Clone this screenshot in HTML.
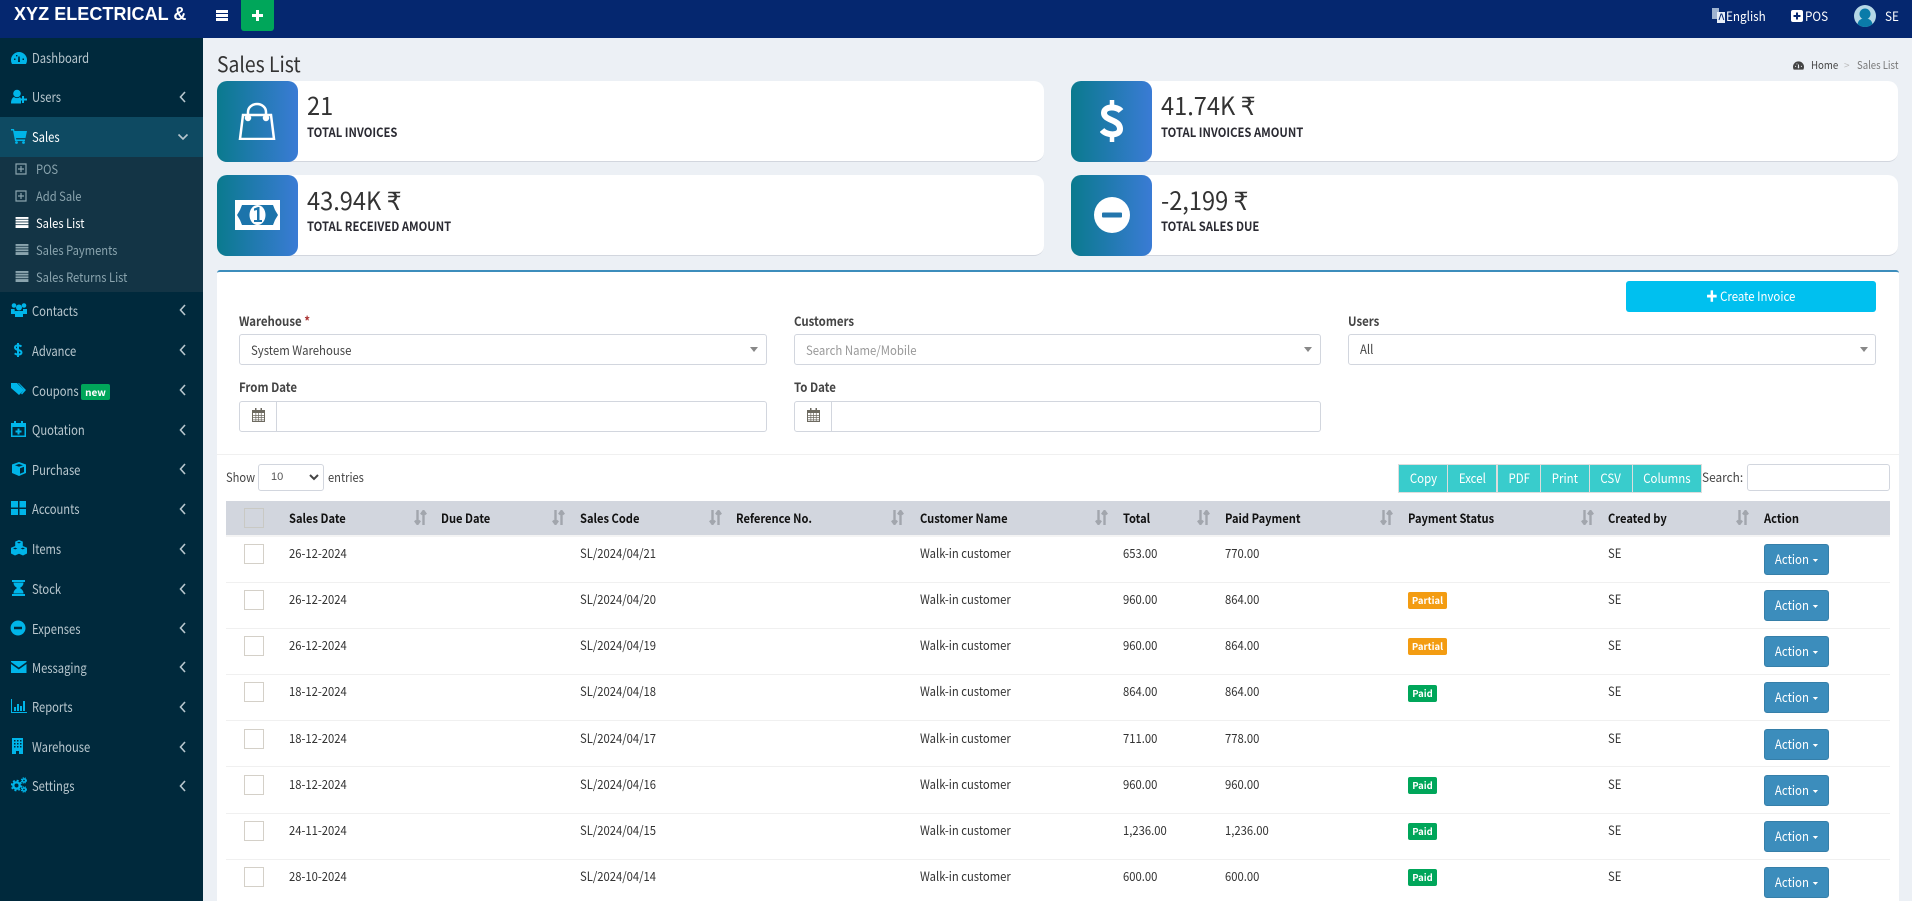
<!DOCTYPE html>
<html><head><meta charset="utf-8"><title>Sales List</title>
<style>
*{box-sizing:border-box}
html,body{margin:0;padding:0;width:1912px;height:901px;overflow:hidden;background:#ecf0f5;font-family:"Noto Sans CJK SC","Liberation Sans",sans-serif;color:#333}
#w{position:absolute;left:0;top:0;width:1912px;height:901px;overflow:hidden}
.a,.t,.s,.c,.h{position:absolute}
.t,.s,.c,.h{white-space:nowrap;line-height:20px;transform-origin:0 50%}
.s{left:32px;font-size:13.5px;color:#b8c7ce;transform:scaleX(.83)}
.i{position:absolute;left:11px;width:16px;height:16px;fill:#00b5e9}
.ch{position:absolute;left:179px;width:8px;height:12px;fill:none;stroke:#b8c7ce;stroke-width:1.6}
.sub{left:36px;font-size:13px;color:#8aa4ae;transform:scaleX(.86)}
.c{font-size:12.5px;color:#333;transform:scaleX(.9)}
.h{font-size:12.5px;font-weight:700;color:#111;top:508px;transform:scaleX(.89)}
.so{position:absolute;top:510px;width:13px;height:15px;stroke:#a2a6ad;fill:none;stroke-width:2.4}
.cb{position:absolute;left:244px;width:20px;height:20px;border:1px solid #d4d0c8;background:#fff}
.ab{position:absolute;left:1764px;width:65px;height:31px;background:#3c8dbc;border:1px solid #367fa9;border-radius:3px;color:#fff;font-size:13px;line-height:27px;text-align:center}
.ab i{display:inline-block;width:0;height:0;border:3.5px solid transparent;border-top-color:#fff;border-bottom:0;margin-left:4px;vertical-align:2px}
.b{display:inline-block;transform:scaleX(.88)}
.l{position:absolute;left:1408px;height:17px;border-radius:2px;color:#fff;font-size:9.5px;font-weight:700;line-height:17px;text-align:center}
.pa{width:39px;background:#f39c12}.pd{width:29px;background:#00a65a}
.card{position:absolute;width:827px;height:81px;background:#fff;border-radius:10px;border-bottom:1px solid #d2d6de}
.ic{position:absolute;width:81px;height:81px;border-radius:10px;background:linear-gradient(to right,#0a7a8e,#3a7bd5)}
.n{font-size:25px;line-height:34px;color:#333;transform:scaleX(.945)}
.lb{font-size:13px;font-weight:700;color:#2b2b33;transform:scaleX(.865)}
.fl{font-size:13px;font-weight:700;color:#444;transform:scaleX(.88)}
.inp{position:absolute;height:31px;background:#fff;border:1px solid #d2d6de;border-radius:3px}
.ar{position:absolute;width:0;height:0;border:4px solid transparent;border-top:5px solid #888;border-bottom:0}
.bt{position:absolute;top:464px;height:29px;background:#39cccc;border:1px solid #ddd;color:#fff;font-size:13px;line-height:26px;text-align:center}
.fi{font-size:12.5px;color:#444;transform:scaleX(.91)}
.tb{font-size:13px;color:#fff;transform:scaleX(.9)}
.x{transform:scaleX(.89)}
</style></head><body><div id="w">
<svg width="0" height="0" style="position:absolute"><defs>
<symbol id="sort" viewBox="0 0 13 15"><path d="M3.500 0v14M1 10.500l2.500 3.500 2.500-3.500M9.500 15V1M7 4.500L9.500 1 12 4.500"/></symbol>
<symbol id="cal" viewBox="0 0 13 14"><path fill="#6d6a60" d="M0 2h13v12H0zM1 5v8h11V5z"/><path fill="#6d6a60" d="M3 0h1.500v3H3zM8.500 0H10v3H8.500zM1 7h11v.7H1zM1 9.300h11v.7H1zM1 11.500h11v.7H1zM3.500 5h.7v8h-.7zM6.200 5h.7v8h-.7zM8.900 5h.7v8h-.7z"/></symbol>
<symbol id="gauge" viewBox="0 0 16 16"><path d="M8 2a8 8 0 0 0-8 8c0 1.500.4 3 1 4h14c.6-1 1-2.500 1-4a8 8 0 0 0-8-8z"/><path fill="#00293c" d="M7.300 6.500h1.400L9 12H7zM3 8.500h1.500V10H3zM11.500 8.500H13V10h-1.500zM5 5h1.400v1.400H5z"/></symbol>
<symbol id="list" viewBox="0 0 14 12"><path d="M0 0h14v12H0z" fill-opacity=".25"/><path d="M0 0h14v2H0zM0 3.200h14v1.600H0zM0 6h14v1.600H0zM0 8.800h14V12H0z"/></symbol>
<symbol id="pl" viewBox="0 0 12 12"><path fill="none" stroke-width="1.200" d="M1 1h10v10H1zM6 3v6M3 6h6"/></symbol>
</defs></svg>

<!-- top bar -->
<div class="a" style="left:0;top:0;width:1912px;height:38px;background:#05276f"></div>
<div class="t" style="left:14px;top:4px;font:700 18px/20px 'Liberation Sans',sans-serif;color:#fff;letter-spacing:.05px">XYZ ELECTRICAL &amp;</div>
<div class="a" style="left:216px;top:10px;width:12px;height:2.500px;background:#fff;box-shadow:0 4px 0 #fff,0 8px 0 #fff"></div>
<div class="a" style="left:241px;top:0;width:33px;height:31px;background:#00a65a;border-radius:0 0 3px 3px"></div>
<svg class="a" style="left:252px;top:10px" width="11" height="11"><path d="M4 0h3v4h4v3H7v4H4V7H0V4h4z" fill="#fff"/></svg>
<svg class="a" style="left:1712px;top:8px" width="13" height="15"><path d="M0 0h7v11H0z" fill="#9fb3d0"/><path d="M5 4h8v11H5z" fill="#e8eef7"/><path d="M7 12l2-6h.8l2 6" stroke="#05276f" fill="none"/></svg>
<div class="t tb" style="left:1726px;top:6px">English</div>
<svg class="a" style="left:1791px;top:10px" width="12" height="12"><rect width="12" height="12" rx="2" fill="#fff"/><path d="M5 2.500h2V5h2.500v2H7v2.500H5V7H2.500V5H5z" fill="#05276f"/></svg>
<div class="t tb" style="left:1805px;top:6px">POS</div>
<svg class="a" style="left:1854px;top:5px" width="22" height="22"><circle cx="11" cy="11" r="11" fill="#b5d7e6"/><circle cx="11" cy="9" r="5.500" fill="#0a7ba9"/><path d="M3.500 19c1-4.500 4-5.500 7.500-5.500s6.500 1 7.500 5.500a11 11 0 0 1-15 0z" fill="#0a7ba9"/></svg>
<div class="t tb" style="left:1885px;top:6px">SE</div>

<!-- sidebar -->
<div class="a" style="left:0;top:38px;width:203px;height:863px;background:#00293c"></div>
<div class="a" style="left:0;top:117px;width:203px;height:40px;background:#0e4a62"></div>
<div class="a" style="left:0;top:157px;width:203px;height:135px;background:#133445"></div>

<svg class="i" style="top:50px;"><use href="#gauge"/></svg><div class="s" style="top:47px">Dashboard</div>
<svg class="i" style="top:89px;" viewBox="0 0 16 16"><circle cx="6" cy="4.500" r="3.800"/><path d="M0 14.500c0-4 1.500-6 3-6.500 2 1.500 4 1.500 6 0l1 1.500v5zM11 7h2v2.500h3v2h-3V14h-2v-2.500H8.500v-2H11z"/></svg><div class="s" style="top:86px">Users</div>
<svg class="ch" style="top:91px"><path d="M6 1L1.500 6 6 11"/></svg>
<svg class="i" style="top:128px;" viewBox="0 0 16 16"><path d="M0 1h3l.5 2H16l-1.500 7H5l.3 1.500H14V13H4L2 2.500H0z"/><circle cx="5.500" cy="14.500" r="1.400"/><circle cx="12.500" cy="14.500" r="1.400"/></svg><div class="s" style="top:126px;color:#fff">Sales</div>
<svg class="ch" style="top:131px;left:177px;width:12px"><path d="M1.500 3.500L6 8l4.500-4.500"/></svg>

<svg class="a" style="left:15px;top:163px;fill:none;stroke:#8aa4ae" width="12" height="12"><use href="#pl"/></svg><div class="s sub" style="top:159px">POS</div>
<svg class="a" style="left:15px;top:190px;fill:none;stroke:#8aa4ae" width="12" height="12"><use href="#pl"/></svg><div class="s sub" style="top:186px">Add Sale</div>
<svg class="a" style="left:15px;top:217px;fill:#fff" width="14" height="11"><use href="#list"/></svg><div class="s sub" style="top:213px;color:#fff">Sales List</div>
<svg class="a" style="left:15px;top:244px;fill:#8aa4ae" width="14" height="11"><use href="#list"/></svg><div class="s sub" style="top:240px">Sales Payments</div>
<svg class="a" style="left:15px;top:271px;fill:#8aa4ae" width="14" height="11"><use href="#list"/></svg><div class="s sub" style="top:267px">Sales Returns List</div>

<svg class="i" style="top:302px;" viewBox="0 0 16 16"><circle cx="8" cy="5.500" r="3"/><circle cx="3" cy="3.500" r="2.300"/><circle cx="13" cy="3.500" r="2.300"/><path d="M0 7h3.500L4 10v2H0zM12 7h4v5h-4zM4 9h8v6H4z"/></svg><div class="s" style="top:300px">Contacts</div>
<svg class="ch" style="top:304px"><path d="M6 1L1.500 6 6 11"/></svg>
<svg class="i" style="top:342px;left:10px" viewBox="0 0 16 16"><path fill="none" stroke="#00b5e9" stroke-width="2" d="M11.500 4.500C9.500 2.800 5 3 5 5.500c0 3 6.500 2 6.500 5 0 2.500-4.800 2.700-6.800.8M8 1v14"/></svg><div class="s" style="top:340px">Advance</div>
<svg class="ch" style="top:344px"><path d="M6 1L1.500 6 6 11"/></svg>
<svg class="i" style="top:381px;" viewBox="0 0 16 16"><path d="M0 2h6l7 7-5 5-8-7zM8 2l7 7-4 4.500-1-1L13 9 7 2z"/></svg><div class="s" style="top:380px">Coupons</div>
<div class="a" style="left:81px;top:384px;width:29px;height:16px;background:#00a65a;border-radius:2px;color:#fff;font-size:10px;font-weight:700;line-height:16px;text-align:center">new</div>
<svg class="ch" style="top:384px"><path d="M6 1L1.500 6 6 11"/></svg>
<svg class="i" style="top:421px;left:11px" viewBox="0 0 16 16"><path d="M0 2h3V0h2v2h5V0h2v2h3v14H0zM1.500 6v8.500h12V6zM6.500 7.500h2V9.500h2v2h-2v2h-2v-2h-2v-2h2z"/></svg><div class="s" style="top:419px">Quotation</div>
<svg class="ch" style="top:424px"><path d="M6 1L1.500 6 6 11"/></svg>
<svg class="i" style="top:461px;" viewBox="0 0 16 16"><path d="M8 1l7 2.500v8.500L8 15 1 12V3.500zM8 3L4 4.300 8 5.800l4-1.500zM9 7.300v5.500l4-1.700V5.700z"/></svg><div class="s" style="top:459px">Purchase</div>
<svg class="ch" style="top:463px"><path d="M6 1L1.500 6 6 11"/></svg>
<svg class="i" style="top:500px;" viewBox="0 0 16 16"><path d="M0 1h7v6.500H0zM8.500 1H15v6.500H8.500zM0 9h7v6H0zM8.500 9H15v6H8.500z"/></svg><div class="s" style="top:498px">Accounts</div>
<svg class="ch" style="top:503px"><path d="M6 1L1.500 6 6 11"/></svg>
<svg class="i" style="top:540px;" viewBox="0 0 16 16"><path d="M8 0l3.800 1.600V6L16 7.800v5.700L12 15.500l-4-1.700-4 1.700-4-2V7.800L4.200 6V1.600z"/><path fill="#00293c" d="M6 2.600l2 .8 2-.8-2-.8zM2 8.500l2.200.9 2.200-.9-2.200-.9zM9.600 8.500l2.200.9 2.200-.9-2.200-.9z"/></svg><div class="s" style="top:538px">Items</div>
<svg class="ch" style="top:543px"><path d="M6 1L1.500 6 6 11"/></svg>
<svg class="i" style="top:580px;left:11px" viewBox="0 0 16 16"><path d="M1 0h13v2H1zM1 14h13v2H1zM2.500 2.500h10C12.500 6 10 7 9 8c1 1 3.500 2 3.500 5.500h-10C2.500 10 5 9 6 8 5 7 2.500 6 2.500 2.500z"/></svg><div class="s" style="top:578px">Stock</div>
<svg class="ch" style="top:583px"><path d="M6 1L1.500 6 6 11"/></svg>
<svg class="i" style="top:620px;left:10px" viewBox="0 0 16 16"><path fill-rule="evenodd" d="M8 .5a7.500 7.500 0 1 0 .1 0zM4 6.800h8v2.400H4z"/></svg><div class="s" style="top:618px">Expenses</div>
<svg class="ch" style="top:622px"><path d="M6 1L1.500 6 6 11"/></svg>
<svg class="i" style="top:659px;" viewBox="0 0 16 16"><path d="M0 2h15.500v1L7.800 8.500 0 3zM0 5l7.800 5.500L15.500 5v9H0z"/></svg><div class="s" style="top:657px">Messaging</div>
<svg class="ch" style="top:661px"><path d="M6 1L1.500 6 6 11"/></svg>
<svg class="i" style="top:698px;" viewBox="0 0 16 16"><path d="M0 1h1v13h16v1H0zM3 9h2v4H3zM6 6h2v7H6zM9 8h2v5H9zM12 3h2v10h-2z"/></svg><div class="s" style="top:696px">Reports</div>
<svg class="ch" style="top:701px"><path d="M6 1L1.500 6 6 11"/></svg>
<svg class="i" style="top:738px;" viewBox="0 0 16 16"><path d="M1 0h11v16H8v-3H5v3H1zM3 2v1.500h1.500V2zM6 2v1.500h1.500V2zM9 2v1.500h1.500V2zM3 5v1.500h1.500V5zM6 5v1.500h1.500V5zM9 5v1.500h1.500V5zM3 8v1.500h1.500V8zM6 8v1.500h1.500V8zM9 8v1.500h1.500V8z"/></svg><div class="s" style="top:736px">Warehouse</div>
<svg class="ch" style="top:741px"><path d="M6 1L1.500 6 6 11"/></svg>
<svg class="i" style="top:777px;" viewBox="0 0 16 16"><circle cx="5.500" cy="8.500" r="3.200" fill="none" stroke="#00b5e9" stroke-width="2.400"/><circle cx="5.500" cy="8.500" r="5" fill="none" stroke="#00b5e9" stroke-width="1.600" stroke-dasharray="2 1.930"/><circle cx="13" cy="3.500" r="1.600" fill="none" stroke="#00b5e9" stroke-width="1.400"/><circle cx="13" cy="3.500" r="2.700" fill="none" stroke="#00b5e9" stroke-width="1" stroke-dasharray="1.200 1"/><circle cx="13" cy="12.500" r="1.600" fill="none" stroke="#00b5e9" stroke-width="1.400"/><circle cx="13" cy="12.500" r="2.700" fill="none" stroke="#00b5e9" stroke-width="1" stroke-dasharray="1.200 1"/></svg><div class="s" style="top:775px">Settings</div>
<svg class="ch" style="top:780px"><path d="M6 1L1.500 6 6 11"/></svg>

<!-- title -->
<div class="t" style="left:217px;top:50px;font-size:21px;line-height:28px;color:#333;transform:scaleX(.92)">Sales List</div>
<svg class="a" style="left:1793px;top:60px" width="11" height="11" viewBox="0 0 16 16"><path fill="#444" d="M8 2a8 8 0 0 0-8 8c0 1.500.4 3 1 4h14c.6-1 1-2.500 1-4a8 8 0 0 0-8-8z"/><path fill="#ecf0f5" d="M7.300 6.500h1.400L9 12H7zM3 8.500h1.500V10H3zM11.500 8.500H13V10h-1.500zM5 5h1.400v1.400H5z"/></svg>
<div class="t" style="left:1811px;top:55px;font-size:11px;color:#444;transform:scaleX(.88)">Home</div>
<div class="t" style="left:1844px;top:55px;font-size:10px;color:#bbb">&gt;</div>
<div class="t" style="left:1857px;top:55px;font-size:11px;color:#777;transform:scaleX(.87)">Sales List</div>

<!-- cards -->
<div class="card" style="left:217px;top:81px"></div><div class="ic" style="left:217px;top:81px"></div>
<div class="card" style="left:1071px;top:81px"></div><div class="ic" style="left:1071px;top:81px"></div>
<div class="card" style="left:217px;top:175px"></div><div class="ic" style="left:217px;top:175px"></div>
<div class="card" style="left:1071px;top:175px"></div><div class="ic" style="left:1071px;top:175px"></div>

<svg class="a" style="left:238px;top:102px" width="38" height="38" fill="none" stroke="#fff" stroke-width="2.500"><path d="M5 13h28l3 24H2z"/><path d="M10 14V10a9 8 0 0 1 18 0v4"/><circle cx="10" cy="16" r="2" fill="#fff"/><circle cx="28" cy="16" r="2" fill="#fff"/></svg>
<svg class="a" style="left:1100px;top:100px" width="24" height="42" fill="none" stroke="#fff" stroke-width="6"><path d="M21 11C17 6 4 6 4 13c0 8 16 6 16 16 0 7-13 7-18 1"/><path d="M12 0v7M12 35v7" stroke-width="4.500"/></svg>
<svg class="a" style="left:235px;top:200px" width="45" height="30"><path d="M0 0h45v30H0z" fill="#fff"/><path d="M7 5h31l2 5 3 5-3 5-2 5H7l-2-5-3-5 3-5z" fill="#1c74ab"/><ellipse cx="22.500" cy="15" rx="8" ry="10" fill="#fff"/><path d="M19 8.500l4-1.500h1.500v13H27v2h-8v-2h3V10l-3 .8z" fill="#1c74ab"/></svg>
<svg class="a" style="left:1094px;top:197px" width="36" height="36"><circle cx="18" cy="18" r="18" fill="#fff"/><rect x="8" y="15.500" width="20" height="5" rx="1" fill="#2376ad"/></svg>

<div class="t n" style="left:307px;top:88px">21</div>
<div class="t lb" style="left:307px;top:122px">TOTAL INVOICES</div>
<div class="t n" style="left:1161px;top:88px">41.74K ₹</div>
<div class="t lb" style="left:1161px;top:122px">TOTAL INVOICES AMOUNT</div>
<div class="t n" style="left:307px;top:183px">43.94K ₹</div>
<div class="t lb" style="left:307px;top:216px">TOTAL RECEIVED AMOUNT</div>
<div class="t n" style="left:1161px;top:183px">-2,199 ₹</div>
<div class="t lb" style="left:1161px;top:216px">TOTAL SALES DUE</div>

<!-- main box -->
<div class="a" style="left:217px;top:270px;width:1682px;height:631px;background:#fff;border-top:2px solid #3c8dbc;border-radius:3px 3px 0 0"></div>
<div class="a" style="left:1626px;top:281px;width:250px;height:31px;background:#00c0ef;border-radius:3px;color:#fff;font-size:13px;line-height:30px;text-align:center"><span class="b">✚ Create Invoice</span></div>

<div class="t fl" style="left:239px;top:311px">Warehouse <span style="color:#a33">*</span></div>
<div class="inp" style="left:239px;top:334px;width:528px"></div>
<div class="t fi" style="left:251px;top:340px">System Warehouse</div><div class="ar" style="left:750px;top:347px"></div>
<div class="t fl" style="left:794px;top:311px">Customers</div>
<div class="inp" style="left:794px;top:334px;width:527px"></div>
<div class="t fi" style="left:806px;top:340px;color:#999">Search Name/Mobile</div><div class="ar" style="left:1304px;top:347px"></div>
<div class="t fl" style="left:1348px;top:311px">Users</div>
<div class="inp" style="left:1348px;top:334px;width:528px"></div>
<div class="t fi" style="left:1360px;top:339px">All</div><div class="ar" style="left:1860px;top:347px"></div>

<div class="t fl" style="left:239px;top:377px">From Date</div>
<div class="inp" style="left:239px;top:401px;width:528px"></div><div class="a" style="left:276px;top:401px;width:1px;height:31px;background:#d2d6de"></div>
<svg class="a" style="left:252px;top:408px" width="13" height="14"><use href="#cal"/></svg>
<div class="t fl" style="left:794px;top:377px">To Date</div>
<div class="inp" style="left:794px;top:401px;width:527px"></div><div class="a" style="left:831px;top:401px;width:1px;height:31px;background:#d2d6de"></div>
<svg class="a" style="left:807px;top:408px" width="13" height="14"><use href="#cal"/></svg>

<div class="a" style="left:217px;top:454px;width:1682px;height:1px;background:#f0f0f0"></div>

<div class="t x" style="left:226px;top:467px;font-size:12.5px;color:#444">Show</div>
<div class="inp" style="left:258px;top:464px;width:66px;height:27px"></div>
<div class="t" style="left:271px;top:467px;font:11px/20px 'Liberation Sans',sans-serif;color:#555">10</div>
<svg class="a" style="left:309px;top:474px" width="10" height="7"><path d="M1 1l4 4 4-4" fill="none" stroke="#444" stroke-width="2"/></svg>
<div class="t x" style="left:328px;top:467px;font-size:12.5px;color:#444">entries</div>

<div class="bt" style="left:1398px;width:50px"><span class="b">Copy</span></div>
<div class="bt" style="left:1447px;width:50px"><span class="b">Excel</span></div>
<div class="bt" style="left:1497px;width:44px"><span class="b">PDF</span></div>
<div class="bt" style="left:1540px;width:50px"><span class="b">Print</span></div>
<div class="bt" style="left:1589px;width:44px"><span class="b">CSV</span></div>
<div class="bt" style="left:1632px;width:70px"><span class="b">Columns</span></div>
<div class="t" style="left:1702px;top:467px;font-size:12.5px;color:#444;transform:scaleX(.95)">Search:</div>
<div class="inp" style="left:1747px;top:464px;width:143px;height:27px"></div>

<!-- table head -->
<div class="a" style="left:226px;top:501px;width:1664px;height:34px;background:#d2d6de"></div>
<div class="a" style="left:226px;top:535px;width:1664px;height:2px;background:#f4f4f4"></div>
<div class="a" style="left:244px;top:508px;width:20px;height:20px;border:1px solid #c9c9c4"></div>
<div class="h" style="left:289px">Sales Date</div><svg class="so" style="left:414px"><use href="#sort"/></svg>
<div class="h" style="left:441px">Due Date</div><svg class="so" style="left:552px"><use href="#sort"/></svg>
<div class="h" style="left:580px">Sales Code</div><svg class="so" style="left:709px"><use href="#sort"/></svg>
<div class="h" style="left:736px">Reference No.</div><svg class="so" style="left:891px"><use href="#sort"/></svg>
<div class="h" style="left:920px">Customer Name</div><svg class="so" style="left:1095px"><use href="#sort"/></svg>
<div class="h" style="left:1123px">Total</div><svg class="so" style="left:1197px"><use href="#sort"/></svg>
<div class="h" style="left:1225px">Paid Payment</div><svg class="so" style="left:1380px"><use href="#sort"/></svg>
<div class="h" style="left:1408px">Payment Status</div><svg class="so" style="left:1581px"><use href="#sort"/></svg>
<div class="h" style="left:1608px">Created by</div><svg class="so" style="left:1736px"><use href="#sort"/></svg>
<div class="h" style="left:1764px">Action</div>

<!-- row lines -->
<div class="a" style="left:226px;top:582px;width:1664px;height:1px;background:#f0f0f0"></div>
<div class="a" style="left:226px;top:628px;width:1664px;height:1px;background:#f0f0f0"></div>
<div class="a" style="left:226px;top:674px;width:1664px;height:1px;background:#f0f0f0"></div>
<div class="a" style="left:226px;top:720px;width:1664px;height:1px;background:#f0f0f0"></div>
<div class="a" style="left:226px;top:766px;width:1664px;height:1px;background:#f0f0f0"></div>
<div class="a" style="left:226px;top:813px;width:1664px;height:1px;background:#f0f0f0"></div>
<div class="a" style="left:226px;top:859px;width:1664px;height:1px;background:#f0f0f0"></div>

<!-- row 1 -->
<div class="cb" style="top:544px"></div><div class="c" style="left:289px;top:543px">26-12-2024</div><div class="c" style="left:580px;top:543px">SL/2024/04/21</div><div class="c" style="left:920px;top:543px">Walk-in customer</div><div class="c" style="left:1123px;top:543px">653.00</div><div class="c" style="left:1225px;top:543px">770.00</div><div class="c" style="left:1608px;top:543px">SE</div><div class="ab" style="top:544px"><span class="b">Action<i></i></span></div>
<!-- row 2 -->
<div class="cb" style="top:590px"></div><div class="c" style="left:289px;top:589px">26-12-2024</div><div class="c" style="left:580px;top:589px">SL/2024/04/20</div><div class="c" style="left:920px;top:589px">Walk-in customer</div><div class="c" style="left:1123px;top:589px">960.00</div><div class="c" style="left:1225px;top:589px">864.00</div><div class="l pa" style="top:592px">Partial</div><div class="c" style="left:1608px;top:589px">SE</div><div class="ab" style="top:590px"><span class="b">Action<i></i></span></div>
<!-- row 3 -->
<div class="cb" style="top:636px"></div><div class="c" style="left:289px;top:635px">26-12-2024</div><div class="c" style="left:580px;top:635px">SL/2024/04/19</div><div class="c" style="left:920px;top:635px">Walk-in customer</div><div class="c" style="left:1123px;top:635px">960.00</div><div class="c" style="left:1225px;top:635px">864.00</div><div class="l pa" style="top:638px">Partial</div><div class="c" style="left:1608px;top:635px">SE</div><div class="ab" style="top:636px"><span class="b">Action<i></i></span></div>
<!-- row 4 -->
<div class="cb" style="top:682px"></div><div class="c" style="left:289px;top:681px">18-12-2024</div><div class="c" style="left:580px;top:681px">SL/2024/04/18</div><div class="c" style="left:920px;top:681px">Walk-in customer</div><div class="c" style="left:1123px;top:681px">864.00</div><div class="c" style="left:1225px;top:681px">864.00</div><div class="l pd" style="top:685px">Paid</div><div class="c" style="left:1608px;top:681px">SE</div><div class="ab" style="top:682px"><span class="b">Action<i></i></span></div>
<!-- row 5 -->
<div class="cb" style="top:729px"></div><div class="c" style="left:289px;top:728px">18-12-2024</div><div class="c" style="left:580px;top:728px">SL/2024/04/17</div><div class="c" style="left:920px;top:728px">Walk-in customer</div><div class="c" style="left:1123px;top:728px">711.00</div><div class="c" style="left:1225px;top:728px">778.00</div><div class="c" style="left:1608px;top:728px">SE</div><div class="ab" style="top:729px"><span class="b">Action<i></i></span></div>
<!-- row 6 -->
<div class="cb" style="top:775px"></div><div class="c" style="left:289px;top:774px">18-12-2024</div><div class="c" style="left:580px;top:774px">SL/2024/04/16</div><div class="c" style="left:920px;top:774px">Walk-in customer</div><div class="c" style="left:1123px;top:774px">960.00</div><div class="c" style="left:1225px;top:774px">960.00</div><div class="l pd" style="top:777px">Paid</div><div class="c" style="left:1608px;top:774px">SE</div><div class="ab" style="top:775px"><span class="b">Action<i></i></span></div>
<!-- row 7 -->
<div class="cb" style="top:821px"></div><div class="c" style="left:289px;top:820px">24-11-2024</div><div class="c" style="left:580px;top:820px">SL/2024/04/15</div><div class="c" style="left:920px;top:820px">Walk-in customer</div><div class="c" style="left:1123px;top:820px">1,236.00</div><div class="c" style="left:1225px;top:820px">1,236.00</div><div class="l pd" style="top:823px">Paid</div><div class="c" style="left:1608px;top:820px">SE</div><div class="ab" style="top:821px"><span class="b">Action<i></i></span></div>
<!-- row 8 -->
<div class="cb" style="top:867px"></div><div class="c" style="left:289px;top:866px">28-10-2024</div><div class="c" style="left:580px;top:866px">SL/2024/04/14</div><div class="c" style="left:920px;top:866px">Walk-in customer</div><div class="c" style="left:1123px;top:866px">600.00</div><div class="c" style="left:1225px;top:866px">600.00</div><div class="l pd" style="top:869px">Paid</div><div class="c" style="left:1608px;top:866px">SE</div><div class="ab" style="top:867px"><span class="b">Action<i></i></span></div>
</div></body></html>
